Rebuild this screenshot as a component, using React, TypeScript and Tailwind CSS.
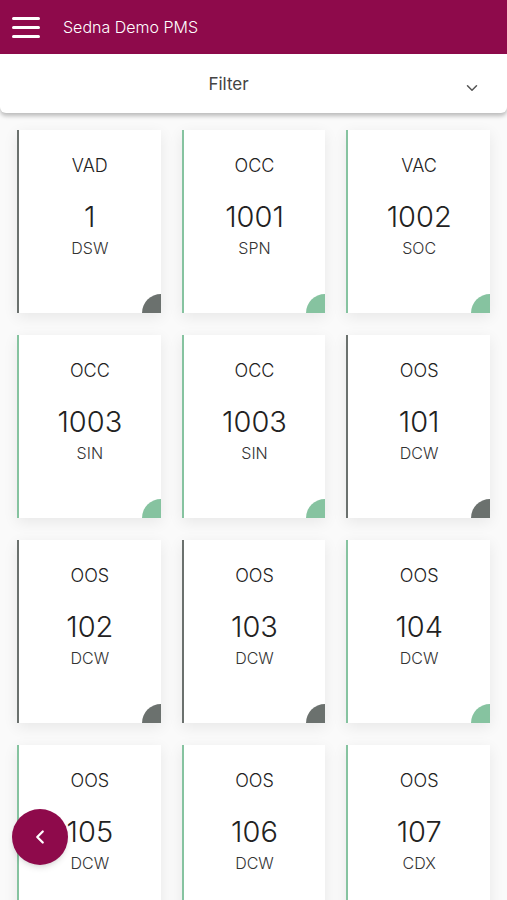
import { ChevronDown, ChevronLeft } from "lucide-react";

type Room = {
    status: string;
    number: string;
    code: string;
    tone: "gray" | "green";
};

const rooms: Room[] = [
    { status: "VAD", number: "1", code: "DSW", tone: "gray" },
    { status: "OCC", number: "1001", code: "SPN", tone: "green" },
    { status: "VAC", number: "1002", code: "SOC", tone: "green" },
    { status: "OCC", number: "1003", code: "SIN", tone: "green" },
    { status: "OCC", number: "1003", code: "SIN", tone: "green" },
    { status: "OOS", number: "101", code: "DCW", tone: "gray" },
    { status: "OOS", number: "102", code: "DCW", tone: "gray" },
    { status: "OOS", number: "103", code: "DCW", tone: "gray" },
    { status: "OOS", number: "104", code: "DCW", tone: "green" },
    { status: "OOS", number: "105", code: "DCW", tone: "green" },
    { status: "OOS", number: "106", code: "DCW", tone: "green" },
    { status: "OOS", number: "107", code: "CDX", tone: "green" },
];

const RoomCard = ({ status, number, code, tone }: Room) => {
    const green = tone === "green";
    return (
        <div
            className={`relative h-[183px] bg-white border-l-2 shadow-[0_4px_14px_rgba(0,0,0,0.08)] flex flex-col items-center text-[#222] ${
                green ? "border-[#86c3a0]" : "border-[#6b716e]"
            }`}
        >
            <div className="mt-[24px] text-[18px] leading-6 font-light">{status}</div>
            <div className="mt-[21px] text-[29px] leading-9 font-light">{number}</div>
            <div className="mt-[3px] text-[16px] leading-5 text-[#333] font-light">
                {code}
            </div>
            <div
                className={`absolute right-0 bottom-0 w-[19px] h-[19px] rounded-tl-full ${
                    green ? "bg-[#86c3a0]" : "bg-[#6b716e]"
                }`}
            />
        </div>
    );
};

export default function App() {
    return (
        <div
            className="relative w-[507px] h-[900px] overflow-hidden bg-[#fafafa]"
            style={{ fontFamily: "Inter, 'Noto Sans', sans-serif" }}
        >
            <header className="h-[54px] bg-[#8e0a4b] flex items-center px-3">
                <div className="flex flex-col gap-[6px] w-[28px]">
                    <span className="h-[3px] bg-white rounded" />
                    <span className="h-[3px] bg-white rounded" />
                    <span className="h-[3px] bg-white rounded" />
                </div>
                <div className="ml-[23px] text-white text-[16px] font-light">
                    Sedna Demo PMS
                </div>
            </header>

            <div className="relative h-[59px] bg-white rounded-b-md shadow-[0_3px_4px_rgba(0,0,0,0.25)] flex items-center justify-center">
                <span className="mt-[2px] text-[17px] text-[#444] -ml-[50px]">Filter</span>
                <ChevronDown
                    className="absolute right-[26px] top-[25px] text-[#555]"
                    size={18}
                    strokeWidth={2}
                />
            </div>

            <div className="grid grid-cols-3 gap-x-[21px] gap-y-[22px] px-[17px] pt-[17px]">
                {rooms.map((r, i) => (
                    <RoomCard key={i} {...r} />
                ))}
            </div>

            <button className="absolute left-[12px] top-[809px] w-[56px] h-[56px] rounded-full bg-[#8e0a4b] flex items-center justify-center shadow-md">
                <ChevronLeft className="text-white" size={22} strokeWidth={2.5} />
            </button>
        </div>
    );
}
